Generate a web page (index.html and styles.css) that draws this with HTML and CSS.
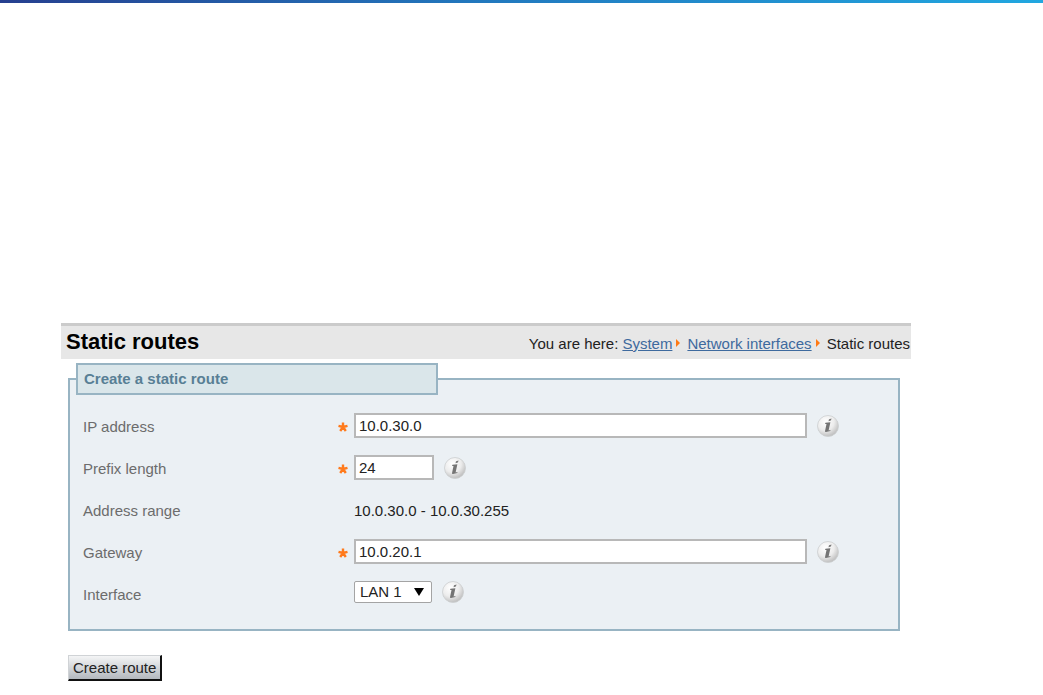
FILE: index.html
```
<!DOCTYPE html>
<html lang="en">
<head>
  <meta charset="UTF-8">
  <title>Static routes</title>
  <meta name="viewport" content="width=device-width, initial-scale=1.0">
  <link rel="stylesheet" href="styles.css">
</head>
<body>
  <!-- shared icons -->
  <svg class="defs" aria-hidden="true">
    <defs>
      <radialGradient id="ball" cx="38%" cy="30%" r="75%">
        <stop offset="0" stop-color="#ffffff"/>
        <stop offset="0.55" stop-color="#ececec"/>
        <stop offset="1" stop-color="#b8b8b8"/>
      </radialGradient>
      <symbol id="info" viewBox="0 0 22 22">
        <circle cx="11" cy="11" r="10.5" fill="url(#ball)" stroke="#cccecf" stroke-width="0.8"/>
        <path d="M12 4.3l2.6-.9-.7 2.2-2.4.6z" fill="#7a7a7a"/>
        <path d="M8.4 7.8l5-.6-1.8 8.2 2-.5-.4 1.2-4.2.9c-.8 0-1.1-.4-.9-1.3l1.4-6.7-1.4.1z" fill="#747474"/>
      </symbol>
      <symbol id="star" viewBox="0 0 10 10">
        <path d="M5 5V.4M5 5L.5 3.8M5 5l4.5-1.2M5 5L2.2 9M5 5l2.8 4" fill="none" stroke="#ff7a1c" stroke-width="2.4"/>
      </symbol>
    </defs>
  </svg>

  <div class="topline"></div>

  <main class="page">
    <header class="titlebar">
      <h1>Static routes</h1>
      <nav class="crumbs">
        <span>You are here:</span>
        <a href="#">System</a>
        <i class="arrow"></i>
        <a href="#">Network interfaces</a>
        <i class="arrow"></i>
        <span>Static routes</span>
      </nav>
    </header>

    <form class="route-form">
      <fieldset>
        <legend>Create a static route</legend>

        <div class="row">
          <label for="ip">IP address</label>
          <svg class="star"><use href="#star"/></svg>
          <div class="field">
            <input type="text" id="ip" value="10.0.30.0">
            <button type="button" class="info" aria-label="Info"><svg><use href="#info"/></svg></button>
          </div>
        </div>

        <div class="row">
          <label for="prefix">Prefix length</label>
          <svg class="star"><use href="#star"/></svg>
          <div class="field">
            <input type="text" id="prefix" class="short" value="24">
            <button type="button" class="info" aria-label="Info"><svg><use href="#info"/></svg></button>
          </div>
        </div>

        <div class="row">
          <label for="range">Address range</label>
          <output id="range" class="field">10.0.30.0 - 10.0.30.255</output>
        </div>

        <div class="row">
          <label for="gateway">Gateway</label>
          <svg class="star"><use href="#star"/></svg>
          <div class="field">
            <input type="text" id="gateway" value="10.0.20.1">
            <button type="button" class="info" aria-label="Info"><svg><use href="#info"/></svg></button>
          </div>
        </div>

        <div class="row">
          <label for="interface">Interface</label>
          <div class="field">
            <div class="select">
              <select id="interface">
                <option>LAN 1</option>
                <option>LAN 2</option>
              </select>
            </div>
            <button type="button" class="info" aria-label="Info"><svg><use href="#info"/></svg></button>
          </div>
        </div>
      </fieldset>

      <button type="submit" class="submit">Create route</button>
    </form>
  </main>
</body>
</html>
```
FILE: styles.css
```
* {
  box-sizing: border-box;
}
body {
  margin: 0;
  background-color: #fff;
  font-family: "Liberation Sans", Arial, sans-serif;
  font-size: 15px;
  color: #222;
}
.defs {
  display: block;
  width: 0;
  height: 0;
}
.topline {
  height: 3px;
  background: linear-gradient(to right, #263f8f, #2277bd 45%, #21a7e0);
}
.page {
  padding: 320px 132px 0 61px;
}

/* title bar */
.titlebar {
  display: flex;
  justify-content: space-between;
  align-items: center;
  height: 36px;
  padding: 0 1px 2px 5px;
  border-top: 3px solid #cbcbcb;
  background-color: #e7e7e7;
}
h1 {
  margin: 0;
  font-size: 22px;
  color: #000;
}
.crumbs {
  display: flex;
  align-items: center;
  gap: 4px;
  padding-top: 3px;
}
.crumbs a {
  color: #3e6a9e;
}
.arrow {
  margin-right: 3px;
  border-left: 4px solid #ff7a14;
  border-top: 4px solid transparent;
  border-bottom: 4px solid transparent;
}

/* form */
.route-form {
  padding: 4px 11px 0 7px;
}
fieldset {
  margin: 0;
  padding: 18px 59px 6px 13px;
  border: 2px solid #98b4c3;
  background-color: #ebf0f4;
}
legend {
  width: 362px;
  margin-left: -7px;
  padding: 0 6px;
  border: 2px solid #98b4c3;
  background-color: #dae6ea;
  font-size: 15px;
  font-weight: bold;
  line-height: 28px;
  color: #587f95;
}
.row {
  display: grid;
  grid-template-columns: 255px 16px 1fr;
  align-items: start;
  height: 42px;
}
.row label {
  line-height: 28px;
  color: #6c6c6c;
}
.star {
  width: 10px;
  height: 10px;
  margin-top: 9px;
}
.field {
  grid-column: 3;
  display: flex;
  align-items: center;
  gap: 10px;
  line-height: 28px;
}
input {
  flex: 1;
  min-width: 0;
  height: 25px;
  padding: 0 3px;
  border: 2px solid #b8b8b8;
  background-color: #fff;
  font: inherit;
  color: #222;
}
input.short {
  flex: none;
  width: 80px;
}
.select {
  position: relative;
}
.select::after {
  content: "";
  position: absolute;
  top: 7px;
  right: 8px;
  border-top: 8px solid #000;
  border-left: 5px solid transparent;
  border-right: 5px solid transparent;
  pointer-events: none;
}
select {
  display: block;
  appearance: none;
  width: 78px;
  height: 22px;
  padding: 0 5px;
  border: 1px solid #a4a4a4;
  border-radius: 2px;
  background-color: #fff;
  font: inherit;
  line-height: 18px;
  color: #222;
}
.info {
  width: 22px;
  height: 22px;
  padding: 0;
  border: 0;
  background: none;
  cursor: pointer;
}
.info svg {
  display: block;
  width: 22px;
  height: 22px;
}
.submit {
  margin-top: 24px;
  height: 26px;
  padding: 0 4px;
  border: 1px solid #d0d3d6;
  border-right: 2px solid #111;
  border-bottom: 2px solid #111;
  background: linear-gradient(#f4f5f6, #b3b8be);
  font: inherit;
  line-height: 20px;
  color: #222;
  cursor: pointer;
}
```
